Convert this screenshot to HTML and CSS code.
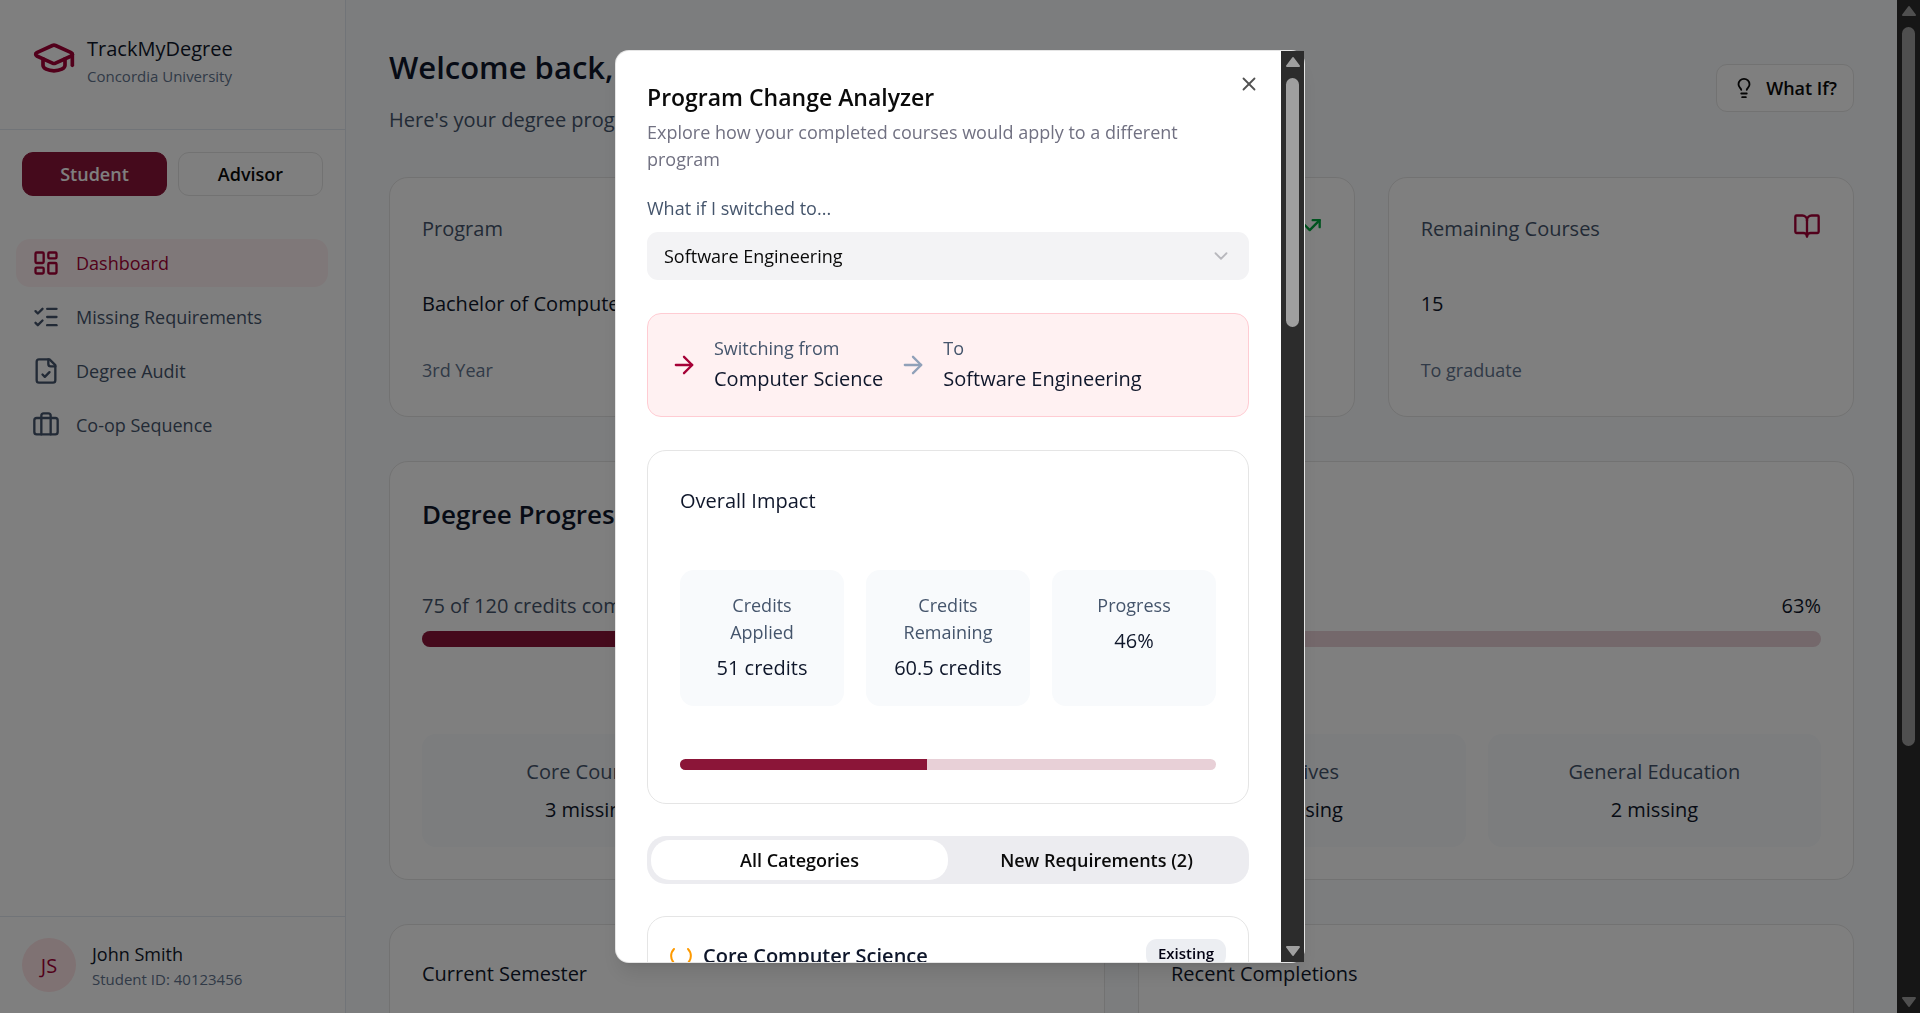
FILE: index.html
```html
<!DOCTYPE html>
<html lang="en">
<head>
<meta charset="utf-8">
<title>TrackMyDegree</title>
<link rel="stylesheet" href="styles.css">
</head>
<body>
<svg class="sprite" aria-hidden="true">
  <symbol id="cap" viewBox="0 0 24 24"><path d="M21.42 10.922a1 1 0 0 0-.019-1.838L12.83 5.18a2 2 0 0 0-1.66 0L2.6 9.08a1 1 0 0 0 0 1.832l8.57 3.908a2 2 0 0 0 1.66 0z"/><path d="M22 10v6"/><path d="M6 12.5V16a6 3 0 0 0 12 0v-3.5"/></symbol>
  <symbol id="dash" viewBox="0 0 24 24"><rect width="7" height="9" x="3" y="3" rx="1"/><rect width="7" height="5" x="14" y="3" rx="1"/><rect width="7" height="9" x="14" y="12" rx="1"/><rect width="7" height="5" x="3" y="16" rx="1"/></symbol>
  <symbol id="checks" viewBox="0 0 24 24"><path d="m3 17 2 2 4-4"/><path d="m3 7 2 2 4-4"/><path d="M13 5h8"/><path d="M13 12h8"/><path d="M13 19h8"/></symbol>
  <symbol id="file" viewBox="0 0 24 24"><path d="M15 2H6a2 2 0 0 0-2 2v16a2 2 0 0 0 2 2h12a2 2 0 0 0 2-2V7Z"/><path d="M14 2v4a2 2 0 0 0 2 2h4"/><path d="m9 15 2 2 4-4"/></symbol>
  <symbol id="case" viewBox="0 0 24 24"><path d="M16 20V4a2 2 0 0 0-2-2h-4a2 2 0 0 0-2 2v16"/><rect width="20" height="14" x="2" y="6" rx="2"/></symbol>
  <symbol id="bulb" viewBox="0 0 24 24"><path d="M15 14c.2-1 .7-1.7 1.5-2.5 1-.9 1.5-2.2 1.5-3.5A6 6 0 0 0 6 8c0 1 .2 2.2 1.5 3.5.7.7 1.3 1.5 1.5 2.5"/><path d="M9 18h6"/><path d="M10 22h4"/></symbol>
  <symbol id="book" viewBox="0 0 24 24"><path d="M12 7v14"/><path d="M3 18a1 1 0 0 1-1-1V4a1 1 0 0 1 1-1h5a4 4 0 0 1 4 4 4 4 0 0 1 4-4h5a1 1 0 0 1 1 1v13a1 1 0 0 1-1 1h-6a3 3 0 0 0-3 3 3 3 0 0 0-3-3z"/></symbol>
  <symbol id="trend" viewBox="0 0 24 24"><path d="M16 7h6v6"/><path d="m22 7-8.500 8.500-5-5L2 17"/></symbol>
  <symbol id="arrow" viewBox="0 0 24 24"><path d="M5 12h14"/><path d="m12 5 7 7-7 7"/></symbol>
  <symbol id="chevron" viewBox="0 0 24 24"><path d="m6 9 6 6 6-6"/></symbol>
  <symbol id="close" viewBox="0 0 24 24"><path d="M18 6 6 18"/><path d="m6 6 12 12"/></symbol>
  <symbol id="status" viewBox="0 0 24 24"><path d="M5 5A10 10 0 0 0 5 19"/><path d="M19 5A10 10 0 0 1 19 19"/></symbol>
  <symbol id="up" viewBox="0 0 16 12"><path class="solid" d="M8 2 14 10H2Z"/></symbol>
  <symbol id="down" viewBox="0 0 16 12"><path class="solid" d="M8 10 14 2H2Z"/></symbol>
</svg>

<div class="app">
  <aside class="sidebar">
    <header class="brand">
      <svg class="icon icon-lg"><use href="#cap"/></svg>
      <div>
        <div class="text">TrackMyDegree</div>
        <div class="small muted">Concordia University</div>
      </div>
    </header>
    <div class="roles">
      <button class="btn btn-primary">Student</button>
      <button class="btn">Advisor</button>
    </div>
    <nav class="nav">
      <a class="nav-link active" href="#"><svg class="icon"><use href="#dash"/></svg>Dashboard</a>
      <a class="nav-link" href="#"><svg class="icon"><use href="#checks"/></svg>Missing Requirements</a>
      <a class="nav-link" href="#"><svg class="icon"><use href="#file"/></svg>Degree Audit</a>
      <a class="nav-link" href="#"><svg class="icon"><use href="#case"/></svg>Co-op Sequence</a>
    </nav>
    <footer class="user">
      <div class="avatar">JS</div>
      <div>
        <div class="user-name">John Smith</div>
        <div class="small muted">Student ID: 40123456</div>
      </div>
    </footer>
  </aside>

  <main class="main">
    <header class="page-head">
      <div>
        <h1>Welcome back, John</h1>
        <p class="text soft">Here's your degree progress overview</p>
      </div>
      <button class="btn btn-tall"><svg class="icon icon-sm"><use href="#bulb"/></svg>What If?</button>
    </header>

    <section class="stats">
      <article class="card stat">
        <div class="stat-head"><span class="text soft">Program</span></div>
        <p class="text">Bachelor of Computer Science</p>
        <p class="body muted">3rd Year</p>
      </article>
      <article class="card stat">
        <div class="stat-head"><span class="text soft">Current GPA</span><svg class="icon green"><use href="#trend"/></svg></div>
      </article>
      <article class="card stat">
        <div class="stat-head"><span class="text soft">Remaining Courses</span><svg class="icon red"><use href="#book"/></svg></div>
        <p class="text">15</p>
        <p class="body muted">To graduate</p>
      </article>
    </section>

    <section class="card progress-card">
      <h2>Degree Progress</h2>
      <div class="between text"><span class="soft">75 of 120 credits completed</span><span>63%</span></div>
      <div class="bar bar-lg"><div class="fill" style="width:63%"></div></div>
      <div class="groups">
        <div class="tile"><div class="text soft">Core Courses</div><div class="text">3 missing</div></div>
        <div class="tile"></div>
        <div class="tile"><div class="text soft">Electives</div><div class="text">4 missing</div></div>
        <div class="tile"><div class="text soft">General Education</div><div class="text">2 missing</div></div>
      </div>
    </section>

    <section class="pair">
      <article class="card"><h3 class="text">Current Semester</h3></article>
      <article class="card"><h3 class="text">Recent Completions</h3></article>
    </section>
  </main>

  <div class="scroll" aria-hidden="true">
    <svg class="tri"><use href="#up"/></svg>
    <div class="track"><div class="thumb" style="height:75%"></div></div>
    <svg class="tri"><use href="#down"/></svg>
  </div>
</div>

<div class="overlay">
  <div class="dialog" role="dialog" aria-labelledby="dlg-title">
    <div class="dialog-body">
      <header>
        <h2 class="dialog-title" id="dlg-title">Program Change Analyzer</h2>
        <p class="body gray">Explore how your completed courses would apply to a different program</p>
      </header>
      <div class="field">
        <label class="body soft" for="program">What if I switched to...</label>
        <div class="select-wrap">
          <select id="program"><option>Software Engineering</option></select>
          <svg class="icon icon-sm"><use href="#chevron"/></svg>
        </div>
      </div>
      <div class="switch">
        <svg class="icon red"><use href="#arrow"/></svg>
        <div><div class="body soft">Switching from</div><div class="text">Computer Science</div></div>
        <svg class="icon pale"><use href="#arrow"/></svg>
        <div><div class="body soft">To</div><div class="text">Software Engineering</div></div>
      </div>
      <section class="card impact">
        <h3 class="text">Overall Impact</h3>
        <div class="metrics">
          <div class="tile metric"><div class="body soft">Credits Applied</div><div class="text">51 credits</div></div>
          <div class="tile metric"><div class="body soft">Credits Remaining</div><div class="text">60.5 credits</div></div>
          <div class="tile metric"><div class="body soft">Progress</div><div class="text">46%</div></div>
        </div>
        <div class="bar"><div class="fill" style="width:46%"></div></div>
      </section>
      <div class="tabs" role="tablist">
        <button class="tab selected" role="tab">All Categories</button>
        <button class="tab" role="tab">New Requirements (2)</button>
      </div>
      <section class="card category">
        <svg class="icon icon-md amber"><use href="#status"/></svg>
        <h4>Core Computer Science</h4>
        <span class="badge">Existing</span>
      </section>
    </div>
    <div class="scroll" aria-hidden="true">
      <svg class="tri"><use href="#up"/></svg>
      <div class="track"><div class="thumb" style="height:29%"></div></div>
      <svg class="tri"><use href="#down"/></svg>
    </div>
    <button class="close" aria-label="Close"><svg class="icon icon-sm"><use href="#close"/></svg></button>
  </div>
</div>
</body>
</html>
```

FILE: styles.css
```css
*, *::before, *::after { box-sizing: border-box; }

:root {
  --wine: #8b1538;
  --red: #a50036;
  --ink: #0f172b;
  --soft: #45556c;
  --muted: #62748e;
  --line: #e5e5e5;
  --tile: #f8fafc;
}

body {
  margin: 0;
  height: 100vh;
  overflow: hidden;
  font-family: "Open Sans", "Noto Sans", sans-serif;
  font-size: 18px;
  line-height: 27px;
  color: var(--ink);
}

h1, h2, h3, h4, p { margin: 0; font-weight: 400; }
button, select { font: inherit; color: #0a0a0a; }

.sprite { position: absolute; width: 0; height: 0; }

.text { font-size: 20px; line-height: 33px; }
.body { font-size: 18px; line-height: 27px; }
.small { font-size: 15px; line-height: 22px; }
.soft { color: var(--soft); }
.muted { color: var(--muted); }
.gray { color: #717182; }
.red { color: var(--red); }
.green { color: #00a63e; }
.pale { color: #90a1b9; }
.amber { color: #fe9a00; }

.icon {
  width: 28px;
  height: 28px;
  flex: none;
  fill: none;
  stroke: currentColor;
  stroke-width: 2;
  stroke-linecap: round;
  stroke-linejoin: round;
}
.icon-lg { width: 44px; height: 44px; }
.icon-md { width: 24px; height: 24px; }
.icon-sm { width: 22px; height: 22px; }

.app { display: flex; height: 100vh; background: #f8fafc; }

/* Sidebar */
.sidebar {
  width: 346px;
  flex: none;
  display: flex;
  flex-direction: column;
  background: #fff;
  border-right: 1px solid #e2e8f0;
}
.brand {
  display: flex;
  gap: 11px;
  padding: 32px 32px 42px;
  border-bottom: 1px solid #e2e8f0;
}
.brand .icon { color: var(--red); margin-top: 4px; }
.roles { display: flex; gap: 11px; padding: 22px; }
.roles .btn { flex: 1; }
.btn {
  display: flex;
  align-items: center;
  justify-content: center;
  gap: 11px;
  height: 44px;
  padding: 0 16px;
  border: 1px solid var(--line);
  border-radius: 11px;
  background: #fff;
  font-weight: 600;
}
.btn-primary { background: var(--wine); border-color: var(--wine); color: #fff; }
.btn-tall { height: 48px; margin-top: 20px; }

.nav {
  flex: 1;
  display: flex;
  flex-direction: column;
  gap: 6px;
  padding: 21px 17px 16px 16px;
}
.nav-link {
  display: flex;
  align-items: center;
  gap: 16px;
  height: 48px;
  padding: 0 16px;
  border-radius: 14px;
  color: var(--soft);
  text-decoration: none;
}
.nav-link.active { background: #fff1f2; color: var(--red); }

.user {
  display: flex;
  align-items: center;
  gap: 16px;
  padding: 21px 22px;
  border-top: 1px solid #e2e8f0;
}
.avatar {
  width: 54px;
  height: 54px;
  display: grid;
  place-items: center;
  border-radius: 50%;
  background: #ffe4e6;
  color: var(--red);
  font-size: 20px;
}

/* Page */
.main { flex: 1; min-width: 0; padding: 44px 43px; overflow: hidden; }
.page-head {
  display: flex;
  justify-content: space-between;
  align-items: flex-start;
  margin-bottom: 41px;
}
h1 { font-size: 31px; line-height: 46px; margin-bottom: 13px; font-weight: 600; }
h2 { font-size: 26px; line-height: 40px; font-weight: 600; }

.card {
  background: #fff;
  border: 1px solid var(--line);
  border-radius: 19px;
  padding: 32px;
}
.stats { display: grid; grid-template-columns: repeat(3, 1fr); gap: 33px; margin-bottom: 44px; }
.stat { display: flex; flex-direction: column; min-height: 240px; padding: 34px 32px 32px; }
.stat-head { display: flex; justify-content: space-between; margin-bottom: 42px; }
.stat .body { margin-top: 37px; }

.progress-card { margin-bottom: 44px; }
.progress-card h2 { margin-bottom: 55px; }
.between { display: flex; justify-content: space-between; }
.bar { height: 11px; border-radius: 11px; overflow: hidden; background: #e8d0d7; }
.bar-lg { height: 16px; margin-top: 9px; }
.fill { height: 100%; background: var(--wine); }
.tile { background: var(--tile); border-radius: 14px; text-align: center; }
.groups { display: grid; grid-template-columns: repeat(4, 1fr); gap: 22px; margin-top: 87px; }
.groups .tile { padding: 21px 22px; min-height: 113px; }
.groups .tile .text + .text { margin-top: 5px; }

.pair { display: grid; grid-template-columns: 1fr 1fr; gap: 33px; }
.pair .card { min-height: 300px; }

/* Scroll bars */
.scroll {
  width: 23px;
  flex: none;
  display: flex;
  flex-direction: column;
  align-items: center;
  padding: 5px 0;
  background: #2c2c2c;
}
.track { flex: 1; width: 13px; padding: 10px 0; }
.thumb { border-radius: 7px; background: #9f9f9f; }
.tri { width: 16px; height: 12px; flex: none; }
.solid { fill: #9f9f9f; stroke: #9f9f9f; stroke-width: 2; stroke-linejoin: round; }

/* Dialog */
.overlay {
  position: fixed;
  inset: 0;
  display: grid;
  place-items: center;
  background: rgba(0, 0, 0, 0.5);
}
.dialog {
  position: relative;
  display: flex;
  width: 690px;
  max-width: 90vw;
  height: calc(100vh - 100px);
  border: 1px solid rgba(0, 0, 0, 0.1);
  border-radius: 14px;
  background: #fff;
  box-shadow: 0 14px 20px -4px rgba(0, 0, 0, 0.1), 0 6px 8px -6px rgba(0, 0, 0, 0.1);
}
.dialog-body {
  flex: 1;
  min-width: 0;
  padding: 32px 32px 32px 31px;
  overflow: hidden;
  border-radius: 13px 0 0 13px;
}
.dialog-title { font-size: 23px; line-height: 28px; color: #0a0a0a; margin-bottom: 8px; }
.field { margin-top: 22px; }
.field label { display: block; margin-bottom: 10px; }
.select-wrap { display: grid; align-items: center; }
.select-wrap > * { grid-area: 1 / 1; }
.select-wrap .icon { justify-self: end; margin-right: 17px; color: #b8b8bd; pointer-events: none; }
select {
  appearance: none;
  width: 100%;
  height: 48px;
  padding: 0 17px;
  border: 0;
  border-radius: 11px;
  background: #f3f3f5;
}
.switch {
  display: flex;
  align-items: center;
  gap: 16px;
  margin-top: 33px;
  padding: 21px 22px;
  border: 1px solid #ffccd3;
  border-radius: 14px;
  background: #fff1f2;
}
.impact { margin-top: 33px; padding: 33px 32px; }
.metrics { display: grid; grid-template-columns: repeat(3, 1fr); gap: 22px; margin: 53px 0; }
.metric { padding: 22px; }
.metric .text { margin-top: 5px; }
.tabs {
  display: flex;
  margin-top: 32px;
  padding: 4px;
  border-radius: 19px;
  background: #ececf0;
}
.tab {
  flex: 1;
  height: 40px;
  border: 0;
  border-radius: 19px;
  background: transparent;
  font-weight: 600;
}
.tab.selected { background: #fff; }
.category {
  display: flex;
  align-items: center;
  gap: 10px;
  margin-top: 32px;
  padding: 22px 22px 22px 21px;
}
.category h4 { flex: 1; font-size: 20px; line-height: 33px; font-weight: 600; }
.badge {
  align-self: flex-start;
  padding: 3px 12px;
  border-radius: 11px;
  background: #eceef2;
  font-size: 15px;
  line-height: 22px;
  font-weight: 600;
  color: #030213;
}
.close {
  position: absolute;
  top: 22px;
  right: 44px;
  padding: 0;
  border: 0;
  background: none;
  line-height: 0;
  opacity: 0.7;
}
```
